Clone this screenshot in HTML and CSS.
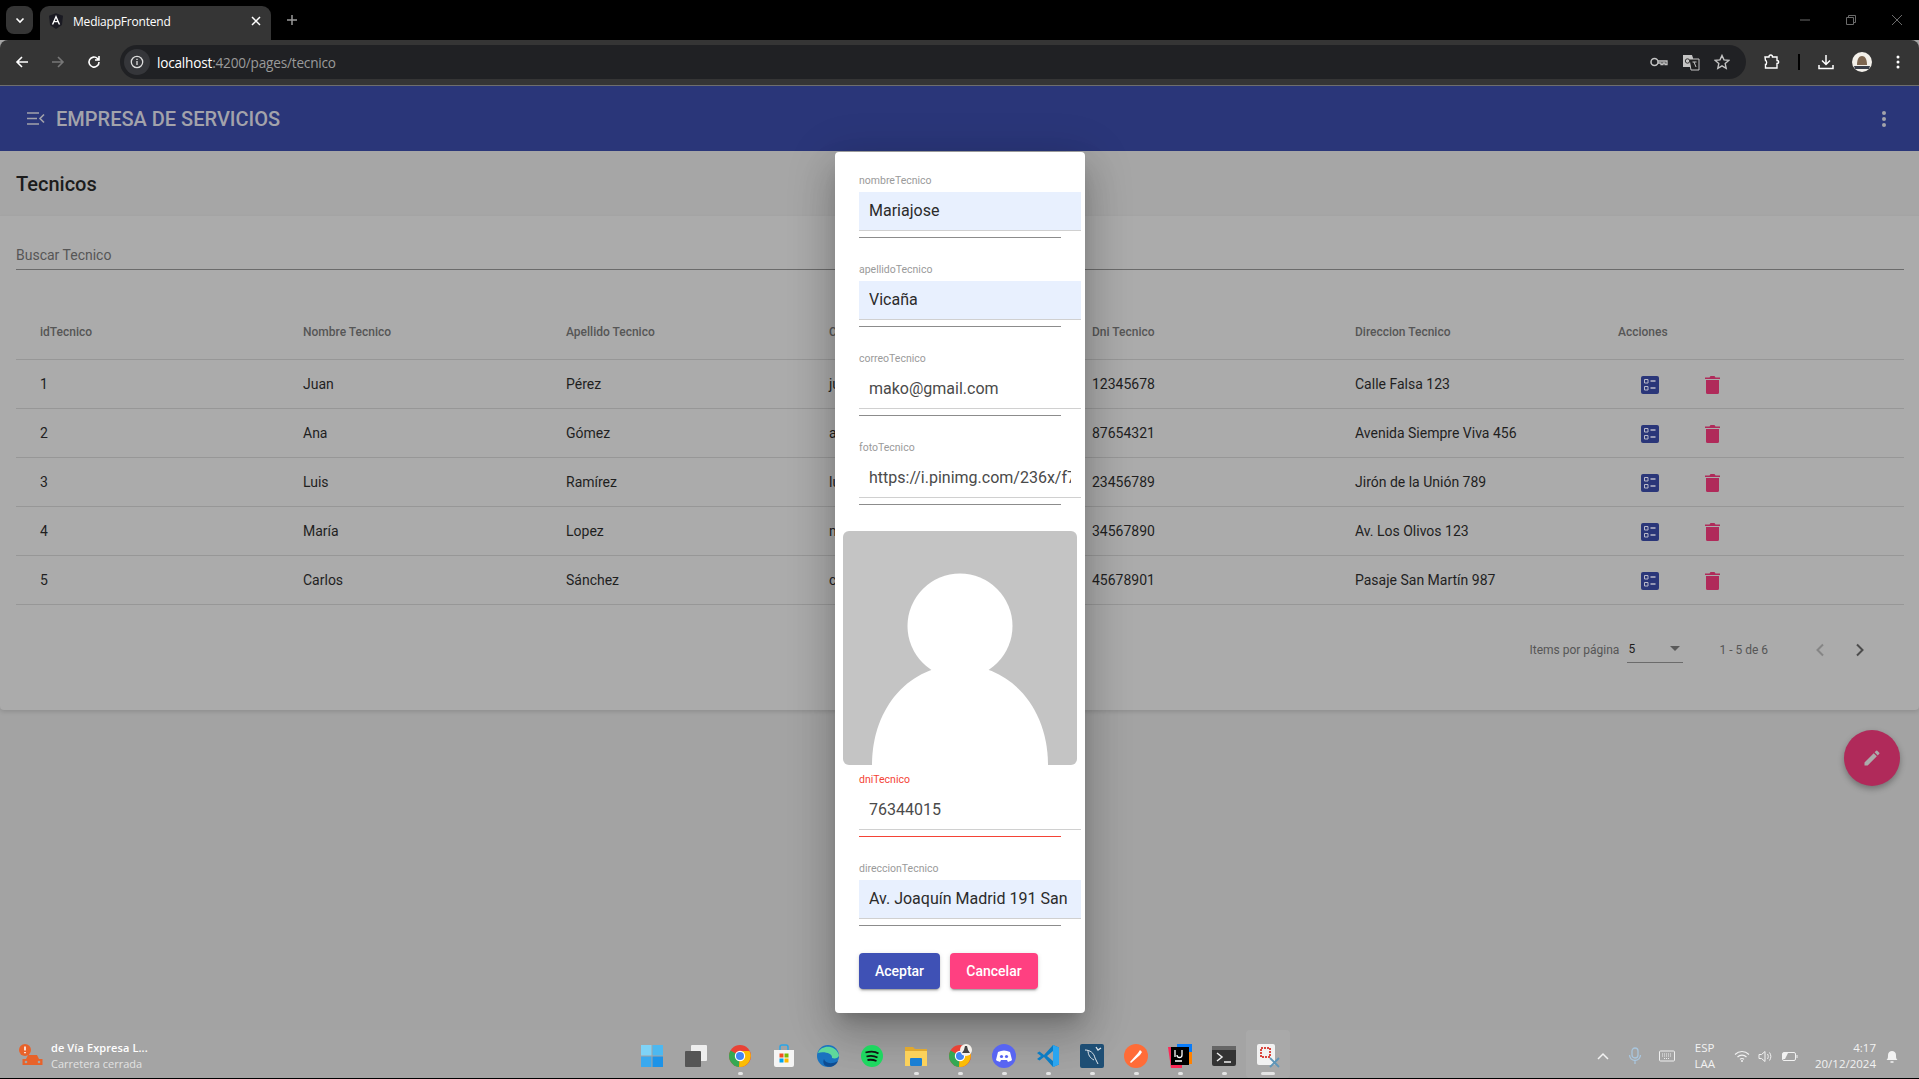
FILE: index.html
```html
<!DOCTYPE html>
<html lang="en">
<head>
  <meta charset="UTF-8">
  <title>MediappFrontend</title>
  <link rel="stylesheet" href="styles.css">
</head>
<body>

  <!-- Browser chrome -->
  <div class="tabstrip">
    <div class="tab-search"><svg width="12" height="12" viewBox="0 0 12 12"><path d="M2.500 4.500 6 8l3.500-3.500" fill="none" stroke="#fff" stroke-width="1.600"/></svg></div>
    <div class="tab">
      <svg class="tab-logo" width="14" height="16" viewBox="0 0 16 18"><path d="M8 0 0 3l1.200 10.500L8 18l6.800-4.500L16 3z" fill="#1a1a22"/><path d="M8 2 3.200 13h1.800l1-2.500h4l1 2.500h1.800zM6.700 9 8 5.800 9.300 9z" fill="#fff"/></svg>
      <span class="tab-title">MediappFrontend</span>
      <svg width="10" height="10" viewBox="0 0 10 10"><path d="M1 1l8 8M9 1l-8 8" stroke="#fff" stroke-width="1.500"/></svg>
    </div>
    <svg class="tab-new" width="12" height="12" viewBox="0 0 12 12"><path d="M6 1v10M1 6h10" stroke="#9a9a9a" stroke-width="1.500"/></svg>
    <div class="win-btns">
      <svg width="12" height="12" viewBox="0 0 12 12"><path d="M1 6h10" stroke="#6b6b6b"/></svg>
      <svg width="12" height="12" viewBox="0 0 12 12"><path d="M1.500 3.500h7v7h-7zM3.500 3.500v-2h7v7h-2" fill="none" stroke="#6b6b6b"/></svg>
      <svg width="12" height="12" viewBox="0 0 12 12"><path d="M1 1l10 10M11 1 1 11" stroke="#6b6b6b"/></svg>
    </div>
  </div>

  <div class="toolbar">
    <svg class="nav-icon" width="16" height="16" viewBox="0 0 16 16"><path d="M14 8H3M8 3 3 8l5 5" fill="none" stroke="#fff" stroke-width="1.600"/></svg>
    <svg class="nav-icon" width="16" height="16" viewBox="0 0 16 16"><path d="M2 8h11M8 3l5 5-5 5" fill="none" stroke="#777" stroke-width="1.600"/></svg>
    <svg class="nav-icon" width="16" height="16" viewBox="0 0 16 16"><path d="M13 8a5 5 0 1 1-1.500-3.500L13 6M13 2v4H9" fill="none" stroke="#fff" stroke-width="1.600"/></svg>
    <div class="omnibox">
      <div class="site-info"><svg width="14" height="14" viewBox="0 0 14 14"><circle cx="7" cy="7" r="5.700" fill="none" stroke="#ddd" stroke-width="1.300"/><path d="M7 6v4M7 3.800v1.200" stroke="#ddd" stroke-width="1.300"/></svg></div>
      <span class="url"><b>localhost</b>:4200/pages/tecnico</span>
      <div class="omni-icons">
        <svg width="18" height="12" viewBox="0 0 18 12"><circle cx="4.500" cy="6" r="3.500" fill="none" stroke="#c4c4c4" stroke-width="1.500"/><path d="M8 5h9v3.500h-2V7h-2v1.500h-2V7H8" fill="none" stroke="#c4c4c4" stroke-width="1.300"/></svg>
        <svg width="18" height="17" viewBox="0 0 18 17"><path d="M1 1h9l1 3v9H1z" fill="#c4c4c4"/><path d="M7 5h10v11H9z" fill="#222" stroke="#c4c4c4"/><circle cx="5.500" cy="7" r="2.200" fill="none" stroke="#333"/><path d="M10.500 8h4M12 8l2 5" stroke="#c4c4c4"/></svg>
        <svg width="16" height="16" viewBox="0 0 16 16"><path d="m8 1.500 2 4.400 4.800.5-3.600 3.200 1 4.700L8 11.900l-4.200 2.400 1-4.700L1.200 6.400 6 5.900z" fill="none" stroke="#c4c4c4" stroke-width="1.400"/></svg>
      </div>
    </div>
    <div class="tool-icons">
      <svg width="16" height="16" viewBox="0 0 16 16"><path d="M1 3h4c0-2.600 3.500-2.600 3.500 0h4.500v3.500c2.200 0 2.200 3 0 3V14H1.500v-3.500c1.500 0 1.500-4 0-4z" fill="none" stroke="#fff" stroke-width="1.400"/></svg>
      <span class="tool-sep"></span>
      <svg width="16" height="16" viewBox="0 0 16 16"><path d="M8 1v9M4 6.500 8 10.500l4-4M1 11v3.500h14V11" fill="none" stroke="#fff" stroke-width="1.500"/></svg>
      <span class="profile"><svg width="20" height="20" viewBox="0 0 20 20"><circle cx="10" cy="10" r="10" fill="#f3f0ea"/><path d="M5 13c0-6 2-9 5-9s5 3 5 9z" fill="#7d6650"/><path d="M2 14h16l-1 3H3z" fill="#3a3f4a"/></svg></span>
      <svg class="tool-more" width="4" height="14" viewBox="0 0 4 14"><circle cx="2" cy="2" r="1.500" fill="#fff"/><circle cx="2" cy="7" r="1.500" fill="#fff"/><circle cx="2" cy="12" r="1.500" fill="#fff"/></svg>
    </div>
  </div>

  <!-- App -->
  <header class="app-header">
    <svg width="18" height="13" viewBox="0 0 18 13"><path d="M0 1h12M0 6.500h10M0 12h12M17 2.500l-4 4 4 4" fill="none" stroke="#a3a3ab" stroke-width="1.600"/></svg>
    <span class="app-title">EMPRESA DE SERVICIOS</span>
    <svg class="app-more" width="6" height="16" viewBox="0 0 6 16"><circle cx="3" cy="2" r="2" fill="#a3a3ab"/><circle cx="3" cy="8" r="2" fill="#a3a3ab"/><circle cx="3" cy="14" r="2" fill="#a3a3ab"/></svg>
  </header>

  <main class="page">
    <div class="page-title">Tecnicos</div>
    <section class="card">
      <div class="search">Buscar Tecnico</div>

      <div class="table">
        <div class="row head">
          <div>idTecnico</div><div>Nombre Tecnico</div><div>Apellido Tecnico</div><div>Correo Tecnico</div><div>Dni Tecnico</div><div>Direccion Tecnico</div><div>Acciones</div>
        </div>
        <div class="row">
          <div>1</div><div>Juan</div><div>Pérez</div><div>ju</div><div>12345678</div><div>Calle Falsa 123</div>
          <div class="actions">
            <svg class="act-edit" viewBox="0 0 18 18"><use href="#ic-list"/></svg>
            <svg class="act-del" viewBox="0 0 15 18"><use href="#ic-trash"/></svg>
          </div>
        </div>
        <div class="row">
          <div>2</div><div>Ana</div><div>Gómez</div><div>a</div><div>87654321</div><div>Avenida Siempre Viva 456</div>
          <div class="actions">
            <svg class="act-edit" viewBox="0 0 18 18"><use href="#ic-list"/></svg>
            <svg class="act-del" viewBox="0 0 15 18"><use href="#ic-trash"/></svg>
          </div>
        </div>
        <div class="row">
          <div>3</div><div>Luis</div><div>Ramírez</div><div>lu</div><div>23456789</div><div>Jirón de la Unión 789</div>
          <div class="actions">
            <svg class="act-edit" viewBox="0 0 18 18"><use href="#ic-list"/></svg>
            <svg class="act-del" viewBox="0 0 15 18"><use href="#ic-trash"/></svg>
          </div>
        </div>
        <div class="row">
          <div>4</div><div>María</div><div>Lopez</div><div>m</div><div>34567890</div><div>Av. Los Olivos 123</div>
          <div class="actions">
            <svg class="act-edit" viewBox="0 0 18 18"><use href="#ic-list"/></svg>
            <svg class="act-del" viewBox="0 0 15 18"><use href="#ic-trash"/></svg>
          </div>
        </div>
        <div class="row">
          <div>5</div><div>Carlos</div><div>Sánchez</div><div>c</div><div>45678901</div><div>Pasaje San Martín 987</div>
          <div class="actions">
            <svg class="act-edit" viewBox="0 0 18 18"><use href="#ic-list"/></svg>
            <svg class="act-del" viewBox="0 0 15 18"><use href="#ic-trash"/></svg>
          </div>
        </div>
      </div>

      <div class="paginator">
        <span>Items por página</span>
        <div class="page-size"><span>5</span><i class="caret"></i></div>
        <span class="range">1 - 5 de 6</span>
        <svg class="pg-btn" width="10" height="14" viewBox="0 0 10 14"><path d="M8 1.500 2.500 7 8 12.500" fill="none" stroke="#858585" stroke-width="2"/></svg>
        <svg class="pg-btn" width="10" height="14" viewBox="0 0 10 14"><path d="M2 1.500 7.500 7 2 12.500" fill="none" stroke="#4c4c4c" stroke-width="2"/></svg>
      </div>
    </section>

    <div class="fab"><svg width="20" height="20" viewBox="0 0 24 24"><path d="M3 17.250V21h3.750L17.810 9.940l-3.750-3.750zM20.710 7.040a1 1 0 0 0 0-1.410l-2.340-2.340a1 1 0 0 0-1.410 0l-1.830 1.830 3.750 3.750z" fill="#ababab"/></svg></div>
  </main>

  <!-- Dialog -->
  <div class="dialog">
    <div class="field">
      <label>nombreTecnico</label>
      <div class="input filled"><span>Mariajose</span></div>
      <div class="line"></div>
    </div>
    <div class="field">
      <label>apellidoTecnico</label>
      <div class="input filled"><span>Vicaña</span></div>
      <div class="line"></div>
    </div>
    <div class="field">
      <label>correoTecnico</label>
      <div class="input"><span>mako@gmail.com</span></div>
      <div class="line"></div>
    </div>
    <div class="field">
      <label>fotoTecnico</label>
      <div class="input"><span>https://i.pinimg.com/236x/f7</span></div>
      <div class="line"></div>
    </div>
    <div class="avatar">
      <svg width="234" height="234" viewBox="0 0 234 234"><rect width="234" height="234" fill="#c4c4c4"/><circle cx="117" cy="95" r="52.500" fill="#fff"/><path d="M29 234c0-58 38-100 88-100s88 42 88 100z" fill="#fff"/></svg>
    </div>
    <div class="field error">
      <label>dniTecnico</label>
      <div class="input"><span>76344015</span></div>
      <div class="line"></div>
    </div>
    <div class="field">
      <label>direccionTecnico</label>
      <div class="input filled"><span>Av. Joaquín Madrid 191 San</span></div>
      <div class="line"></div>
    </div>
    <div class="dialog-actions">
      <button class="btn-ok">Aceptar</button>
      <button class="btn-cancel">Cancelar</button>
    </div>
  </div>

  <!-- Taskbar -->
  <footer class="taskbar">
    <div class="weather">
      <svg width="26" height="24" viewBox="0 0 26 24"><circle cx="7" cy="6" r="6" fill="#e8622a"/><path d="M7 2.500v4M7 8v1.300" stroke="#fff" stroke-width="1.600"/><path d="M8 15l2-4h9l2 4h3.500v6h-20v-6z" fill="#e8622a"/><circle cx="8" cy="18" r="1.300" fill="#a5a5a5"/><circle cx="21" cy="18" r="1.300" fill="#a5a5a5"/></svg>
      <div class="weather-text"><span class="w1">de Vía Expresa L...</span><span class="w2">Carretera cerrada</span></div>
    </div>
    <div class="apps">
      <span class="app"><svg viewBox="0 0 24 24"><path d="M1 1h10.500v10.500H1z" fill="#7fd3f7"/><path d="M12.500 1H23v10.500H12.500z" fill="#4db8f0"/><path d="M1 12.500h10.500V23H1z" fill="#3aa9ee"/><path d="M12.500 12.500H23V23H12.500z" fill="#1d93e8"/></svg></span>
      <span class="app"><svg viewBox="0 0 24 24"><rect x="7" y="1" width="16" height="16" rx="1" fill="#eee"/><rect x="1" y="7" width="16" height="16" rx="1" fill="#555"/></svg></span>
      <span class="app run"><svg viewBox="0 0 24 24"><circle cx="12" cy="12" r="11" fill="#e94235"/><path d="M12 12 2.500 6.500A11 11 0 0 0 11 23z" fill="#34a853"/><path d="M12 7h9.500A11 11 0 0 1 11 23z" fill="#fbbc05"/><circle cx="12" cy="12" r="5.200" fill="#fff"/><circle cx="12" cy="12" r="4" fill="#4285f4"/></svg></span>
      <span class="app"><svg viewBox="0 0 24 24"><path d="M2 6h20v15a2 2 0 0 1-2 2H4a2 2 0 0 1-2-2z" fill="#f5f5f5"/><path d="M8 6V3a2 2 0 0 1 2-2h4a2 2 0 0 1 2 2v3" fill="none" stroke="#2aa5e8" stroke-width="1.500"/><path d="M7.500 9.500h4v4h-4z" fill="#f25022"/><path d="M12.500 9.500h4v4h-4z" fill="#7fba00"/><path d="M7.500 14.500h4v4h-4z" fill="#00a4ef"/><path d="M12.500 14.500h4v4h-4z" fill="#ffb900"/></svg></span>
      <span class="app"><svg viewBox="0 0 24 24"><circle cx="12" cy="12" r="11" fill="#1a73c0"/><path d="M2 9c3-8 17-9 21 2 0 3-4 4-7 3 1-5-9-7-14-5z" fill="#5fd89b"/><path d="M8 15c1 4 7 6 14 2-2 5-8 7-12 5-3-1-3-5-2-7z" fill="#0f4c91"/></svg></span>
      <span class="app"><svg viewBox="0 0 24 24"><circle cx="12" cy="12" r="11" fill="#1ed760"/><path d="M5.500 8.500c4-1 10-1 13 1M6.500 12.500c3-.8 8-.6 11 1M7.500 16c3-.5 6-.3 9 1" fill="none" stroke="#111" stroke-width="1.800"/></svg></span>
      <span class="app run"><svg viewBox="0 0 24 24"><path d="M1 3h8l2 2h12v17H1z" fill="#e0a82e"/><path d="M1 7h22v15H1z" fill="#fbd15b"/><rect x="6" y="14" width="12" height="8" rx="1" fill="#1a7fd4"/></svg></span>
      <span class="app run"><svg viewBox="0 0 24 24"><circle cx="12" cy="12" r="11" fill="#e94235"/><path d="M12 12 2.500 6.500A11 11 0 0 0 11 23z" fill="#34a853"/><path d="M12 7h9.500A11 11 0 0 1 11 23z" fill="#fbbc05"/><circle cx="12" cy="12" r="5.200" fill="#fff"/><circle cx="12" cy="12" r="4" fill="#4285f4"/><circle cx="18" cy="6" r="6" fill="#f3f0ea"/><path d="M14 9h8l-2-3-1-4h-2l-1 4z" fill="#444"/></svg></span>
      <span class="app run"><svg viewBox="0 0 24 24"><circle cx="12" cy="12" r="12" fill="#5865f2"/><path d="M6 8c4-2 8-2 12 0l2 8c-1 1-3 1.500-4 2l-1-2H9l-1 2c-1-.5-3-1-4-2z" fill="#fff"/><circle cx="9.500" cy="12.500" r="1.600" fill="#5865f2"/><circle cx="14.500" cy="12.500" r="1.600" fill="#5865f2"/></svg></span>
      <span class="app run"><svg viewBox="0 0 24 24"><path d="M17 1 8 11 3.500 7.500 1 9l4 3-4 3 2.500 1.500L8 13l9 10 6-2.500v-17z" fill="#0a7cc4"/><path d="M17 1l6 2.500v17L17 23z" fill="#2aa5f0"/><path d="M17 7v10l-6-5z" fill="#a5a5a5"/></svg></span>
      <span class="app run"><svg viewBox="0 0 24 24"><rect width="24" height="24" rx="2" fill="#1e4e74"/><path d="M5 6c5 0 9 3 10 8l3 6M8 6c0 5 2 8 6 10" fill="none" stroke="#dfe6ec" stroke-width="1"/><path d="M16 3l2 3 3-2" fill="none" stroke="#dfe6ec" stroke-width="1.300"/></svg></span>
      <span class="app run"><svg viewBox="0 0 24 24"><circle cx="12" cy="12" r="12" fill="#ff6c37"/><path d="M6 18l8-9 2 2-9 8zM14 9l2-3 2 2-2 3z" fill="#fff"/></svg></span>
      <span class="app run"><svg viewBox="0 0 24 24"><path d="M0 3h14v21H3z" fill="#fe2857"/><path d="M9 0h15v17H9z" fill="#087cfa"/><path d="M14 8h10v12H14z" fill="#ff8100"/><rect x="3" y="3" width="18" height="18" fill="#000"/><path d="M7 6v7M14 6v5a2.500 2.500 0 0 1-5 0M7 17h7" stroke="#fff" stroke-width="1.300" fill="none"/></svg></span>
      <span class="app run"><svg viewBox="0 0 24 24"><rect y="2" width="24" height="20" rx="2" fill="#333"/><rect y="2" width="24" height="4" fill="#666"/><path d="M5 9l5 4-5 4M12 18h7" fill="none" stroke="#eee" stroke-width="1.500"/></svg></span>
      <span class="app run active"><svg viewBox="0 0 24 24"><rect x="1" y="0" width="18" height="21" rx="2" fill="#f2f2f2"/><path d="M5 4h9v9H5z" fill="none" stroke="#d9473f" stroke-width="2" stroke-dasharray="2 1"/><path d="M14 14l9 9M23 14l-9 9" stroke="#5f96b8" stroke-width="1.800"/></svg></span>
    </div>
    <div class="tray">
      <svg width="12" height="8" viewBox="0 0 12 8"><path d="M1 7l5-5 5 5" fill="none" stroke="#f2f2f2" stroke-width="1.500"/></svg>
      <svg class="tray-mic" width="14" height="18" viewBox="0 0 14 18"><rect x="4" y="1" width="6" height="10" rx="3" fill="none" stroke="#a9c6de" stroke-width="1.300"/><path d="M1.500 8a5.500 5.500 0 0 0 11 0M7 14v3" fill="none" stroke="#a9c6de" stroke-width="1.300"/></svg>
      <svg class="tray-kbd" width="16" height="12" viewBox="0 0 16 12"><rect x=".5" y="1" width="15" height="10" rx="1" fill="none" stroke="#eee"/><path d="M3 4h10M3 6h10M5 8.500h6" stroke="#eee" stroke-dasharray="1 1"/></svg>
      <div class="lang"><span>ESP</span><span>LAA</span></div>
      <svg class="tray-wifi" width="16" height="12" viewBox="0 0 16 12"><path d="M1 4.500c4-4 10-4 14 0M3.500 7c2.500-2.500 6.500-2.500 9 0M6 9.300c1-1 3-1 4 0" fill="none" stroke="#f2f2f2" stroke-width="1.100"/><circle cx="8" cy="11" r="1" fill="#f2f2f2"/></svg>
      <svg class="tray-near" width="16" height="13" viewBox="0 0 16 13"><path d="M1 4.500h2.500L7 1.500v10l-3.500-3H1zM9.500 4c1 1.500 1 3.500 0 5M11.500 2.500c1.800 2.500 1.800 5.500 0 8" fill="none" stroke="#f2f2f2"/></svg>
      <svg class="tray-near" width="16" height="12" viewBox="0 0 16 12"><rect x=".5" y="2.500" width="13" height="8" rx="1.500" fill="none" stroke="#f2f2f2"/><path d="M1 3h5l-3 6H1z" fill="#f2f2f2"/><path d="M15 5v3" stroke="#f2f2f2"/></svg>
      <div class="clock"><span>4:17</span><span>20/12/2024</span></div>
      <svg class="tray-near" width="16" height="16" viewBox="0 0 16 16"><path d="M2.500 12c1.500-1 1.500-3 1.500-5 0-2.500 2-4 4-4s4 1.500 4 4c0 2 0 4 1.500 5z" fill="#f2f2f2"/><path d="M6.500 14h3" stroke="#f2f2f2" stroke-width="1.500"/></svg>
    </div>
  </footer>

  <svg class="defs" width="0" height="0">
    <symbol id="ic-list" viewBox="0 0 18 18"><rect width="18" height="18" rx="2" fill="#2a3679"/><path d="M3.500 3.500h3.500v3.500H3.500zM3.500 10.500h3.500v3.500H3.500z" fill="none" stroke="#b9b9c9"/><path d="M9.500 5h5M9.500 12h5" stroke="#b9b9c9" stroke-width="1.500"/></symbol>
    <symbol id="ic-trash" viewBox="0 0 15 18"><path d="M1 4h13v12.500a1.500 1.500 0 0 1-1.500 1.500h-10A1.500 1.500 0 0 1 1 16.500z" fill="#b02a5a"/><path d="M0 1.500h4.500L5.500 0h4l1 1.500H15V3H0z" fill="#b02a5a"/></symbol>
  </svg>

</body>
</html>
```

FILE: styles.css
```css
* { box-sizing: border-box; }
html, body { margin: 0; height: 1079px; overflow: hidden; }
body {
  font-family: Roboto, "Liberation Sans", sans-serif;
  background-color: #a3a3a3;
  display: flex; flex-direction: column;
  color: #1c1c1c;
}
svg { display: block; flex: none; }
.defs { position: absolute; }

/* browser chrome */
.tabstrip {
  height: 40px; background-color: #000; display: flex; align-items: flex-end;
  padding-left: 6px; flex: none;
}
.tab-search {
  width: 27px; height: 28px; background-color: #353535; border-radius: 8px;
  display: flex; align-items: center; justify-content: center;
  margin-bottom: 6px;
}
.tab {
  width: 231px; height: 34px; margin-left: 7px; background-color: #353535;
  border-radius: 9px 9px 0 0; display: flex; align-items: center;
  padding: 0 10px 4px 9px; color: #fff;
}
.tab-logo { margin-right: 10px; }
.tab-title { font: 12px "Open Sans", sans-serif; letter-spacing: -0.2px; flex: 1; }
.tab-new { margin: 0 0 14px 15px; }
.win-btns { margin-left: auto; display: flex; gap: 34px; padding-right: 16px; align-self: center; }

.toolbar {
  height: 46px; background-color: #353535; flex: none;
  display: flex; align-items: center; padding: 0 19px 1px 14px;
  border-bottom: 1px solid #6e6e6e; border-radius: 8px 8px 0 0;
}
.nav-icon { margin-right: 20px; }
.nav-icon:nth-child(3) { margin-right: 18px; }
.omnibox {
  width: 1626px; height: 34px; background-color: #202124; border-radius: 17px;
  display: flex; align-items: center; padding: 0 16px 0 4px; flex: none;
}
.site-info {
  width: 26px; height: 26px; border-radius: 50%; background-color: #35363a;
  display: flex; align-items: center; justify-content: center;
}
.url { font: 13.600px "Open Sans", sans-serif; letter-spacing: -0.2px; color: #9a9a9a; margin-left: 7px; }
.url b { font-weight: 400; color: #fff; }
.omni-icons { margin-left: auto; display: flex; align-items: center; gap: 14px; }
.tool-icons { margin-left: 18px; display: flex; align-items: center; gap: 18px; }
.tool-sep { width: 2px; height: 16px; background-color: #000; }
.tool-more { margin-left: 6px; }

/* app */
.app-header {
  height: 65px; background-color: #2a3679; flex: none;
  display: flex; align-items: center; padding: 0 32px 0 27px;
}
.app-title { font-size: 20px; font-weight: 500; color: #a3a3ab; margin-left: 11px; }
.app-more { margin-left: auto; }

.page { flex: 1; display: flex; flex-direction: column; position: relative; }
.page-title {
  height: 65px; padding-left: 16px; font-size: 20px; font-weight: 500;
  display: flex; align-items: center; color: #1c1c1c; background-color: #a6a6a6;
}
.card {
  height: 494px; background-color: #ababab; padding: 0 15px 0 16px;
  border-radius: 0 0 4px 4px; box-shadow: 0 2px 4px rgba(0, 0, 0, 0.12);
}
.search {
  height: 54px; padding-top: 30px; font-size: 14px; color: #565656;
  border-bottom: 1px solid #6b6b6b; line-height: 18px;
}
.table { margin-top: 34px; }
.row {
  display: grid; grid-template-columns: repeat(6, 263px) 1fr;
  height: 49px; align-items: center; padding-left: 24px;
  border-bottom: 1px solid #979797; font-size: 14px; color: #1f1f1f;
  line-height: 20px;
}
.row.head { height: 56px; font-size: 12px; font-weight: 500; color: #565656; }
.actions { display: flex; align-items: center; gap: 46px; padding: 2px 0 0 23px; }
.act-edit { width: 18px; height: 18px; }
.act-del { width: 15px; height: 18px; }

.paginator {
  display: flex; align-items: center; justify-content: flex-end;
  height: 60px; margin-top: 15px; padding-right: 39px;
  font-size: 12px; color: #565656;
}
.page-size {
  width: 56px; height: 26px; margin-left: 8px; color: #1c1c1c;
  border-bottom: 1px solid #6b6b6b; display: flex; align-items: center;
  justify-content: space-between; padding: 0 3px 2px 1px;
}
.caret { border: 5px solid transparent; border-top-color: #5a5a5a; border-bottom: 0; }
.range { margin: 0 47px 0 36px; }
.pg-btn + .pg-btn { margin-left: 30px; }

.fab {
  position: absolute; right: 19px; top: 579px; width: 56px; height: 56px;
  border-radius: 50%; background-color: #b02a5a;
  display: flex; align-items: center; justify-content: center;
  box-shadow: 0 3px 6px rgba(0, 0, 0, 0.3);
}

/* dialog */
.dialog {
  position: absolute; left: 835px; top: 152px; width: 250px; height: 861px;
  background-color: #fff; border-radius: 4px; padding: 22px 3px 0 24px;
  box-shadow: 0 11px 15px -7px rgba(0,0,0,.2), 0 24px 38px 3px rgba(0,0,0,.14), 0 9px 46px 8px rgba(0,0,0,.12);
}
.field { height: 89px; width: 222px; }
.field label { display: block; font-size: 10.500px; line-height: 14px; color: #9a9a9a; }
.input {
  height: 39px; margin-top: 4px; padding: 0 10px; font-size: 16px; line-height: 37px;
  color: #4a4a4a; border-bottom: 1px solid #d0d0d0;
}
.input span { display: block; white-space: nowrap; overflow: hidden; }
.input.filled { background-color: #e8f0fe; color: #2b2b2b; }
.line { height: 1px; width: 202px; margin-top: 6px; background-color: #8c8c8c; }
.field.error label { color: #f44336; }
.field.error .line { background-color: #f44336; }
.avatar {
  width: 234px; height: 234px; margin: 1px 0 0 -16px; border-radius: 6px; overflow: hidden;
}
.avatar + .field { margin-top: 8px; }
.dialog-actions { display: flex; gap: 10px; margin-top: 2px; }
.dialog-actions button {
  height: 36px; border: none; border-radius: 4px; color: #fff; font: 500 14px Roboto, sans-serif;
  box-shadow: 0 3px 1px -2px rgba(0,0,0,.2), 0 2px 2px rgba(0,0,0,.14), 0 1px 5px rgba(0,0,0,.12);
}
.btn-ok { width: 81px; background-color: #3f51b5; }
.btn-cancel { width: 88px; background-color: #ff4081; }

/* taskbar */
.taskbar {
  height: 49px; flex: none; background-color: #a4a4a4; border-bottom: 1px solid #000;
  display: flex; align-items: center; padding: 4px 19px 0 18px;
  font-family: "Open Sans", sans-serif; color: #f2f2f2; font-size: 11.500px;
}
.weather { display: flex; align-items: center; gap: 7px; width: 612px; flex: none; font-size: 11px; }
.weather-text { display: flex; flex-direction: column; line-height: 16px; }
.w1 { color: #fff; font-weight: 600; letter-spacing: 0.1px; }
.w2 { color: #e2e2e2; }
.apps { display: flex; align-items: center; align-self: stretch; margin-top: -4px; }
.app {
  width: 44px; height: 100%; display: flex; align-items: center; justify-content: center;
  padding-top: 4px; position: relative;
}
.app svg { width: 24px; height: 24px; }
.app.run::after {
  content: ""; position: absolute; left: 20px; bottom: 3px; width: 5px; height: 3px;
  border-radius: 2px; background-color: #e4e4e4;
}
.app.active { background-color: #a9a9a9; border-radius: 4px; }
.app.active::after { left: 15px; width: 14px; }
.tray { margin-left: auto; display: flex; align-items: center; }
.tray-mic { margin-left: 19px; }
.tray-kbd { margin-left: 17px; }
.lang, .clock { display: flex; flex-direction: column; line-height: 16px; text-align: center; }
.lang { margin-left: 19px; }
.tray-wifi { margin-left: 19px; }
.tray-near { margin-left: 8px; }
.clock { text-align: right; margin-left: 17px; }
```
